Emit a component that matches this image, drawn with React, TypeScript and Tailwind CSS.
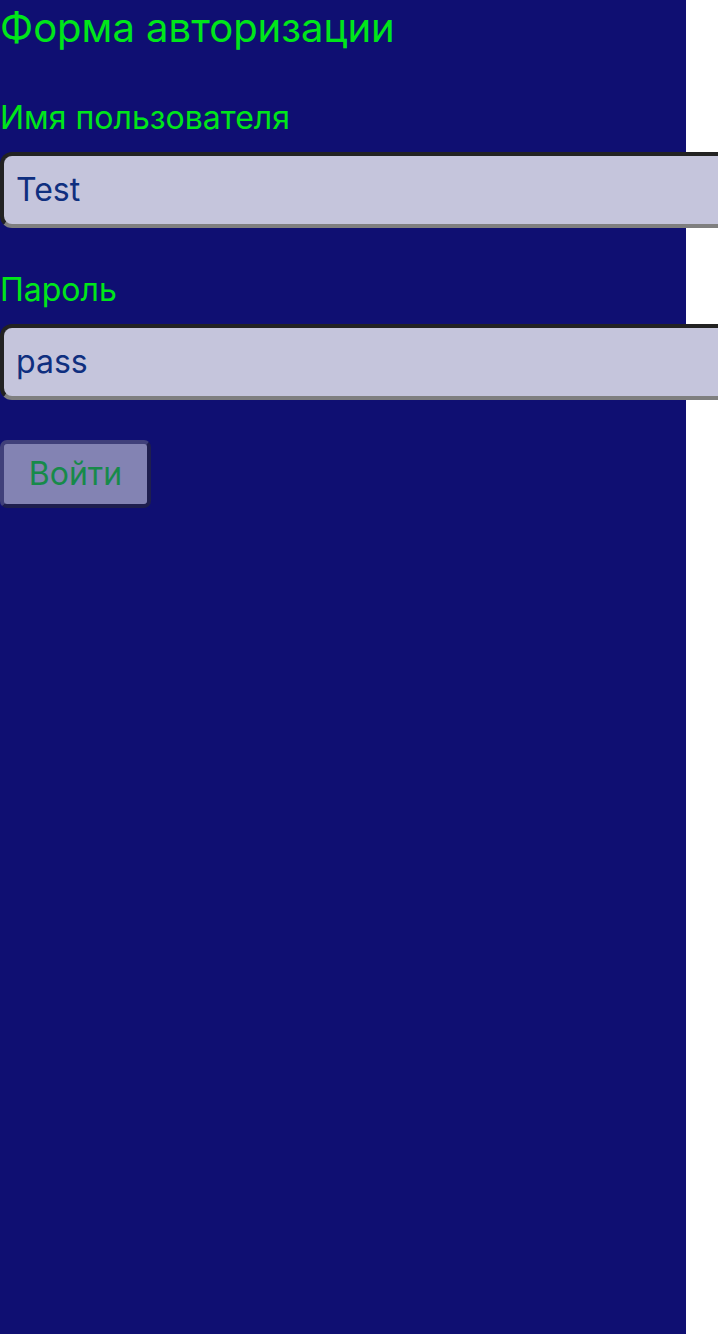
import React from "react";

export default function App() {
  return (
    <div className="w-[718px] h-[1334px] overflow-hidden bg-white" style={{ fontFamily: "Inter, 'Noto Sans', sans-serif" }}>
      <div className="w-[686px] h-[1334px] bg-[#0f0f72]">
        <h1 className="text-[40px] leading-[56px] text-[#00e61a] font-normal whitespace-nowrap">Форма авторизации</h1>
        <div className="mt-[42px] text-[32px] leading-[40px] text-[#00e61a] whitespace-nowrap">Имя пользователя</div>
        <div className="mt-[14px] w-[760px] h-[76px] rounded-[12px] border-4 border-t-[#222222] border-l-[#222222] border-b-[#7f7f7f] border-r-[#7f7f7f] bg-[#c5c5dc] flex items-center pl-[12px] text-[32px] text-[#0f2f7f]">
          Test
        </div>
        <div className="mt-[42px] text-[32px] leading-[40px] text-[#00e61a]">Пароль</div>
        <div className="mt-[14px] w-[760px] h-[76px] rounded-[12px] border-4 border-t-[#222222] border-l-[#222222] border-b-[#7f7f7f] border-r-[#7f7f7f] bg-[#c5c5dc] flex items-center pl-[12px] text-[32px] text-[#0f2f7f]">
          pass
        </div>
        <button className="mt-[40px] w-[151px] h-[68px] rounded-[7px] border-4 border-t-[#40407a] border-l-[#40407a] border-b-[#1e1e4e] border-r-[#1e1e4e] bg-[#8383b3] text-[32px] text-[#178a4a] flex items-center justify-center">
          Войти
        </button>
      </div>
    </div>
  );
}
